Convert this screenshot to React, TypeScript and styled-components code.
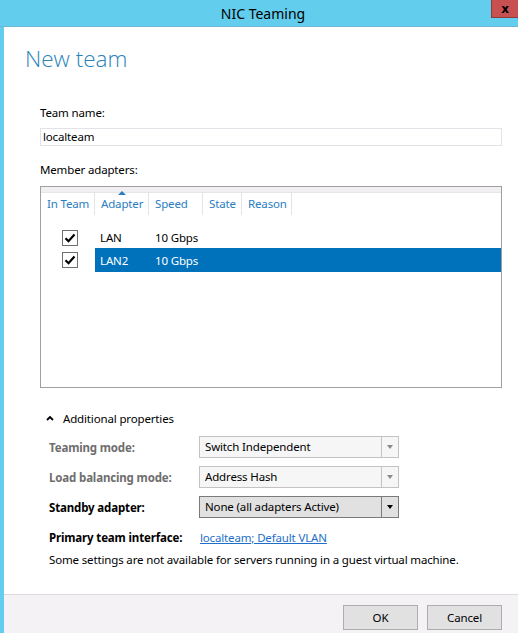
import styled, { createGlobalStyle } from 'styled-components';

const GlobalStyle = createGlobalStyle`
  html, body {
    margin: 0;
    padding: 0;
    background: #ffffff;
  }
  body {
    font-family: "Noto Sans", "Open Sans", sans-serif;
    font-size: 11.5px;
    letter-spacing: -0.15px;
    color: #000;
  }
`;

const Window = styled.div`
  width: 518px;
  height: 633px;
  display: flex;
  flex-direction: column;
  background: #62cdec;
  overflow: hidden;
`;

const TitleBar = styled.div`
  position: relative;
  height: 27px;
  flex: none;
  display: flex;
  align-items: center;
  justify-content: center;
  border-bottom: 1px solid #6fb6d6;
  box-sizing: border-box;
`;

const Title = styled.span`
  font-size: 14px;
  letter-spacing: 0;
  color: #000;
  padding-left: 8px;
`;

const CloseButton = styled.div`
  position: absolute;
  top: 0;
  right: 0;
  width: 27px;
  height: 18px;
  background: #c75050;
  border-left: 1px solid #8c3b3b;
  border-bottom: 1px solid #8c3b3b;
  box-sizing: border-box;
  display: flex;
  align-items: center;
  justify-content: center;
  font-family: "DejaVu Sans", sans-serif;
  font-weight: bold;
  font-size: 12px;
  color: #000;
`;

const Body = styled.div`
  flex: 1;
  margin-left: 4px;
  background: #fff;
  display: flex;
  flex-direction: column;
`;

const Content = styled.div`
  flex: 1;
  padding: 16px 16px 0 21px;
`;

const Heading = styled.h1`
  margin: 0;
  font-family: "Open Sans", "Noto Sans", sans-serif;
  font-weight: 300;
  font-size: 22.5px;
  letter-spacing: 0;
  color: #2a83b9;
  line-height: 32px;
`;

const Section = styled.div`
  padding-left: 15px;
`;

const FieldLabel = styled.div<{ $top: number }>`
  margin-top: ${({ $top }) => $top}px;
  line-height: 16px;
`;

const TextInput = styled.div`
  margin-top: 7px;
  height: 18px;
  border: 1px solid #e2e2e8;
  box-sizing: border-box;
  padding-left: 2px;
  line-height: 16px;
`;

const Table = styled.div`
  margin-top: 8px;
  height: 202px;
  border: 1px solid #a0a0a0;
  box-sizing: border-box;
  display: flex;
  flex-direction: column;
`;

const TableTopStrip = styled.div`
  height: 5px;
  background: #f2eff3;
  border-bottom: 1px solid #e8e6ea;
`;

const HeaderRow = styled.div`
  display: grid;
  grid-template-columns: 54px 54px 54px 39px 50px;
  height: 22px;
`;

const HeaderCell = styled.div<{ $sorted?: boolean }>`
  position: relative;
  border-right: 1px solid #e4e4e4;
  padding-left: 6px;
  color: #2a7dbf;
  line-height: 22px;
  white-space: nowrap;
  &::before {
    content: '';
    display: ${({ $sorted }) => ($sorted ? 'block' : 'none')};
    position: absolute;
    top: -2px;
    left: 23px;
    border-left: 4px solid transparent;
    border-right: 4px solid transparent;
    border-bottom: 4px solid #2a7dbf;
  }
`;

const Rows = styled.div`
  margin-top: 12px;
  display: flex;
  flex-direction: column;
`;

const Row = styled.div<{ $selected?: boolean }>`
  display: grid;
  grid-template-columns: 54px 1fr;
  height: ${({ $selected }) => ($selected ? 24 : 21)}px;
  align-items: center;
`;

const CheckCell = styled.div`
  display: flex;
  justify-content: flex-start;
  padding-left: 21px;
`;

const CheckBox = styled.div`
  width: 16px;
  height: 16px;
  border: 1px solid #707070;
  box-sizing: border-box;
  background: #fff;
  display: flex;
  align-items: center;
  justify-content: center;
`;

const RowBody = styled.div<{ $selected?: boolean }>`
  height: 100%;
  display: grid;
  grid-template-columns: 55px 1fr;
  align-items: center;
  padding-left: 5px;
  background: ${({ $selected }) => ($selected ? '#0072bc' : 'transparent')};
  color: ${({ $selected }) => ($selected ? '#fff' : '#000')};
`;

const Toggle = styled.div`
  margin-top: 22px;
  height: 16px;
  display: flex;
  align-items: center;
  gap: 9px;
  padding-left: 6px;
`;

const Form = styled.div`
  margin-top: 6px;
  padding-left: 9px;
  display: grid;
  grid-template-columns: 150px 200px;
  grid-auto-rows: 30px;
  align-items: center;
`;

const PropLabel = styled.div<{ $disabled?: boolean }>`
  font-weight: bold;
  color: ${({ $disabled }) => ($disabled ? '#6e6e6e' : '#000')};
`;

const Select = styled.div<{ $disabled?: boolean }>`
  height: 22px;
  box-sizing: border-box;
  display: flex;
  border: 1px solid ${({ $disabled }) => ($disabled ? '#c3c3c3' : '#7a7a7a')};
  background: ${({ $disabled }) => ($disabled ? '#f6f6f6' : '#e1e1e1')};
`;

const SelectValue = styled.div`
  flex: 1;
  padding-left: 5px;
  line-height: 20px;
  white-space: nowrap;
`;

const SelectArrow = styled.div<{ $disabled?: boolean }>`
  width: 16px;
  border-left: 1px solid ${({ $disabled }) => ($disabled ? '#c3c3c3' : '#7a7a7a')};
  display: flex;
  align-items: center;
  justify-content: center;
  &::after {
    content: '';
    border-left: 3.5px solid transparent;
    border-right: 3.5px solid transparent;
    border-top: 4px solid ${({ $disabled }) => ($disabled ? '#8a8a8a' : '#000')};
  }
`;

const Link = styled.a`
  color: #1e6fc8;
  text-decoration: underline;
  margin-left: 1px;
`;

const Note = styled.div`
  padding-left: 9px;
  line-height: 16px;
`;

const Footer = styled.div`
  height: 39px;
  flex: none;
  box-sizing: border-box;
  border-top: 1px solid #dcdadc;
  background: #f5f2f5;
  display: flex;
  justify-content: flex-end;
  align-items: flex-start;
  gap: 9px;
  padding: 10px 16px 0 0;
`;

const Button = styled.button`
  width: 75px;
  height: 25px;
  border: 1px solid #adadad;
  background: #e1e1e1;
  font-family: inherit;
  font-size: 11.5px;
  letter-spacing: inherit;
  color: #000;
  padding: 0;
`;

const Check = () => (
  <svg width="12" height="10" viewBox="0 0 12 10">
    <path d="M1.5 5.2 L4.5 8.2 L10.5 1.5" fill="none" stroke="#000" strokeWidth="2.2" />
  </svg>
);

const Chevron = () => (
  <svg width="8" height="6" viewBox="0 0 8 6">
    <path d="M1 5 L4 2 L7 5" fill="none" stroke="#000" strokeWidth="1.8" />
  </svg>
);

const adapters = [
  { name: 'LAN', speed: '10 Gbps', selected: false },
  { name: 'LAN2', speed: '10 Gbps', selected: true },
];

export default function App() {
  return (
    <>
      <GlobalStyle />
      <Window>
        <TitleBar>
          <Title>NIC Teaming</Title>
          <CloseButton>x</CloseButton>
        </TitleBar>
        <Body>
          <Content>
            <Heading>New team</Heading>
            <Section>
              <FieldLabel $top={30}>Team name:</FieldLabel>
              <TextInput>localteam</TextInput>
              <FieldLabel $top={16}>Member adapters:</FieldLabel>
              <Table>
                <TableTopStrip />
                <HeaderRow>
                  <HeaderCell>In Team</HeaderCell>
                  <HeaderCell $sorted>Adapter</HeaderCell>
                  <HeaderCell>Speed</HeaderCell>
                  <HeaderCell>State</HeaderCell>
                  <HeaderCell>Reason</HeaderCell>
                </HeaderRow>
                <Rows>
                  {adapters.map((a) => (
                    <Row key={a.name} $selected={a.selected}>
                      <CheckCell>
                        <CheckBox>
                          <Check />
                        </CheckBox>
                      </CheckCell>
                      <RowBody $selected={a.selected}>
                        <span>{a.name}</span>
                        <span>{a.speed}</span>
                      </RowBody>
                    </Row>
                  ))}
                </Rows>
              </Table>
              <Toggle>
                <Chevron />
                <span>Additional properties</span>
              </Toggle>
              <Form>
                <PropLabel $disabled>Teaming mode:</PropLabel>
                <Select $disabled>
                  <SelectValue>Switch Independent</SelectValue>
                  <SelectArrow $disabled />
                </Select>
                <PropLabel $disabled>Load balancing mode:</PropLabel>
                <Select $disabled>
                  <SelectValue>Address Hash</SelectValue>
                  <SelectArrow $disabled />
                </Select>
                <PropLabel>Standby adapter:</PropLabel>
                <Select>
                  <SelectValue>None (all adapters Active)</SelectValue>
                  <SelectArrow />
                </Select>
                <PropLabel>Primary team interface:</PropLabel>
                <div>
                  <Link href="#">localteam; Default VLAN</Link>
                </div>
              </Form>
              <Note>Some settings are not available for servers running in a guest virtual machine.</Note>
            </Section>
          </Content>
          <Footer>
            <Button>OK</Button>
            <Button>Cancel</Button>
          </Footer>
        </Body>
      </Window>
    </>
  );
}
